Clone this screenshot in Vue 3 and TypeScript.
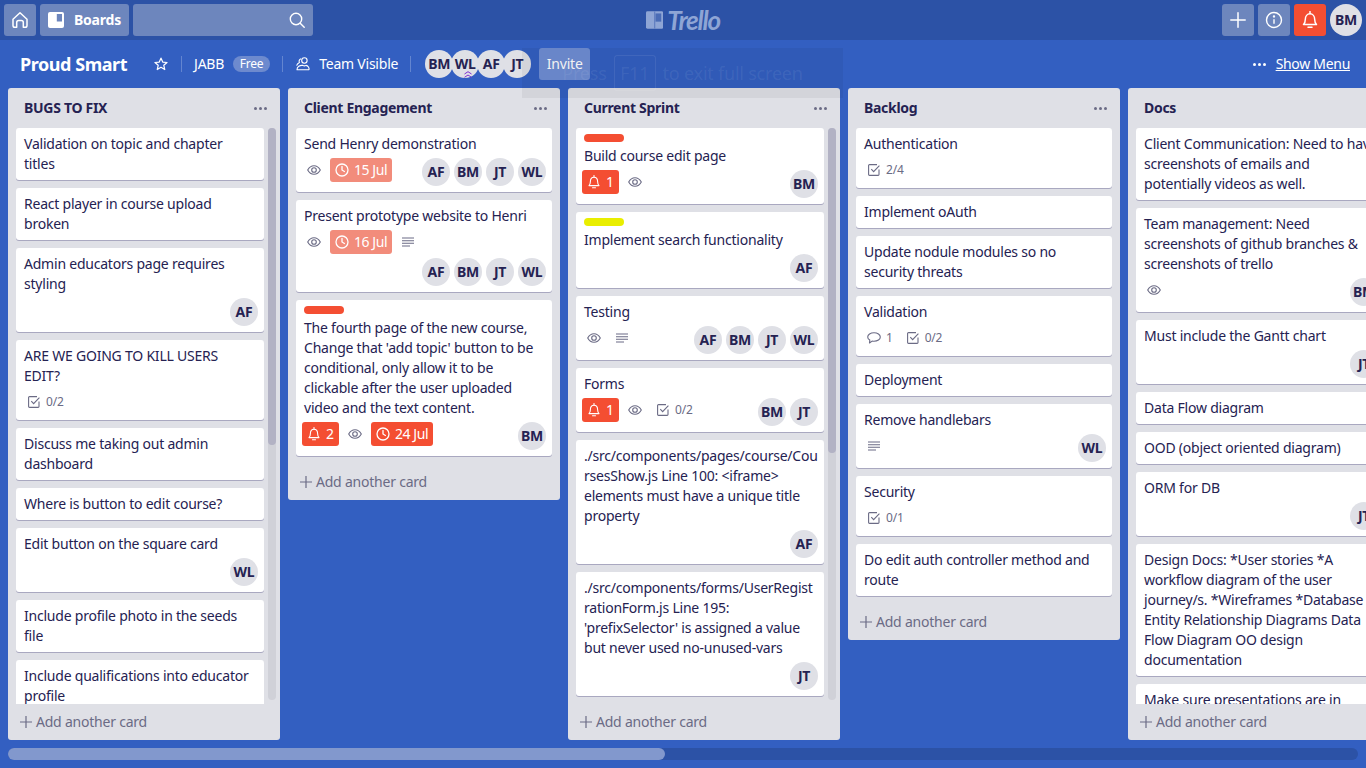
<script setup lang="ts">
type Badge = { kind: 'eye' | 'desc' | 'date' | 'bell' | 'check' | 'comment'; text?: string; overdue?: boolean }
type Card = { lines: string[]; label?: string; badges?: Badge[]; members?: string[] }
type List = { title: string; cards: Card[]; thumb?: number; scrolls?: boolean }

const eye: Badge = { kind: 'eye' }
const desc: Badge = { kind: 'desc' }
const all = ['AF', 'BM', 'JT', 'WL']

const lists: List[] = [
  {
    title: 'BUGS TO FIX',
    thumb: 317,
    scrolls: true,
    cards: [
      { lines: ['Validation on topic and chapter', 'titles'] },
      { lines: ['React player in course upload', 'broken'] },
      { lines: ['Admin educators page requires', 'styling'], members: ['AF'] },
      { lines: ['ARE WE GOING TO KILL USERS', 'EDIT?'], badges: [{ kind: 'check', text: '0/2' }] },
      { lines: ['Discuss me taking out admin', 'dashboard'] },
      { lines: ['Where is button to edit course?'] },
      { lines: ['Edit button on the square card'], members: ['WL'] },
      { lines: ['Include profile photo in the seeds', 'file'] },
      { lines: ['Include qualifications into educator', 'profile'] },
    ],
  },
  {
    title: 'Client Engagement',
    cards: [
      {
        lines: ['Send Henry demonstration'],
        badges: [eye, { kind: 'date', text: '15 Jul' }],
        members: all,
      },
      {
        lines: ['Present prototype website to Henri'],
        badges: [eye, { kind: 'date', text: '16 Jul' }, desc],
        members: all,
      },
      {
        label: '#f44e32',
        lines: [
          'The fourth page of the new course,',
          "Change that 'add topic' button to be",
          'conditional, only allow it to be',
          'clickable after the user uploaded',
          'video and the text content.',
        ],
        badges: [{ kind: 'bell', text: '2' }, eye, { kind: 'date', text: '24 Jul', overdue: true }],
        members: ['BM'],
      },
    ],
  },
  {
    title: 'Current Sprint',
    thumb: 325,
    scrolls: true,
    cards: [
      { label: '#f44e32', lines: ['Build course edit page'], badges: [{ kind: 'bell', text: '1' }, eye], members: ['BM'] },
      { label: '#e9ee00', lines: ['Implement search functionality'], members: ['AF'] },
      { lines: ['Testing'], badges: [eye, desc], members: all },
      {
        lines: ['Forms'],
        badges: [{ kind: 'bell', text: '1' }, eye, { kind: 'check', text: '0/2' }],
        members: ['BM', 'JT'],
      },
      {
        lines: [
          './src/components/pages/course/Cou',
          'rsesShow.js Line 100: <iframe>',
          'elements must have a unique title',
          'property',
        ],
        members: ['AF'],
      },
      {
        lines: [
          './src/components/forms/UserRegist',
          'rationForm.js Line 195:',
          "'prefixSelector' is assigned a value",
          'but never used no-unused-vars',
        ],
        members: ['JT'],
      },
    ],
  },
  {
    title: 'Backlog',
    cards: [
      { lines: ['Authentication'], badges: [{ kind: 'check', text: '2/4' }] },
      { lines: ['Implement oAuth'] },
      { lines: ['Update nodule modules so no', 'security threats'] },
      { lines: ['Validation'], badges: [{ kind: 'comment', text: '1' }, { kind: 'check', text: '0/2' }] },
      { lines: ['Deployment'] },
      { lines: ['Remove handlebars'], badges: [desc], members: ['WL'] },
      { lines: ['Security'], badges: [{ kind: 'check', text: '0/1' }] },
      { lines: ['Do edit auth controller method and', 'route'] },
    ],
  },
  {
    title: 'Docs',
    scrolls: true,
    cards: [
      { lines: ['Client Communication: Need to have', 'screenshots of emails and', 'potentially videos as well.'] },
      {
        lines: ['Team management: Need', 'screenshots of github branches &', 'screenshots of trello'],
        badges: [eye],
        members: ['BM'],
      },
      { lines: ['Must include the Gantt chart'], members: ['JT'] },
      { lines: ['Data Flow diagram'] },
      { lines: ['OOD (object oriented diagram)'] },
      { lines: ['ORM for DB'], members: ['JT'] },
      {
        lines: [
          'Design Docs: *User stories *A',
          'workflow diagram of the user',
          'journey/s. *Wireframes *Database',
          'Entity Relationship Diagrams Data',
          'Flow Diagram OO design',
          'documentation',
        ],
      },
      { lines: ['Make sure presentations are in'] },
    ],
  },
]

const boardMembers = ['BM', 'WL', 'AF', 'JT']
</script>

<template>
  <div class="page">
    <header class="topbar">
      <button class="top-btn square" aria-label="Home">
        <svg width="18" height="18" viewBox="0 0 18 18" fill="none" stroke="#fff" stroke-width="1.5" stroke-linejoin="round">
          <path d="M2 8.2 9 1.8l7 6.4v6.3a1.8 1.8 0 0 1-1.8 1.8h-1.9v-4.8a2 2 0 0 0-2-2H7.700a2 2 0 0 0-2 2v4.800H3.800A1.800 1.800 0 0 1 2 14.500z" />
        </svg>
      </button>
      <button class="top-btn boards">
        <svg width="16" height="16" viewBox="0 0 16 16">
          <rect width="16" height="16" rx="2" fill="#fff" />
          <rect x="8.800" y="2" width="5.200" height="7.500" fill="#6d86bd" />
        </svg>
        <span>Boards</span>
      </button>
      <div class="top-btn search">
        <svg width="16" height="16" viewBox="0 0 16 16" fill="none" stroke="#fff" stroke-width="1.400" stroke-linecap="round">
          <circle cx="7" cy="7" r="5.700" />
          <path d="m11.200 11.200 4 4" />
        </svg>
      </div>
      <div class="logo">
        <svg width="18" height="18" viewBox="0 0 18 18">
          <rect width="18" height="18" rx="1.500" fill="#8ea5d5" />
          <rect x="9.800" y="2.200" width="6" height="8.500" fill="#4a6cb6" />
          <rect x="8.400" y="0" width="1.200" height="18" fill="#5f7dbf" />
        </svg>
        <span>Trello</span>
      </div>
      <button class="top-btn square" aria-label="Create">
        <svg width="16" height="16" viewBox="0 0 16 16" stroke="#fff" stroke-width="1.500" stroke-linecap="round">
          <path d="M8 .8v14.400M.8 8h14.400" />
        </svg>
      </button>
      <button class="top-btn square" aria-label="Information">
        <svg width="18" height="18" viewBox="0 0 18 18" fill="none" stroke="#fff" stroke-width="1.400">
          <circle cx="9" cy="9" r="7.500" />
          <path d="M9 8.200v4.600" />
          <circle cx="9" cy="5.400" r=".5" />
        </svg>
      </button>
      <button class="top-btn square alert" aria-label="Notifications">
        <svg width="16" height="18" viewBox="0 0 16 18" fill="none" stroke="#fff" stroke-width="1.500" stroke-linejoin="round">
          <path d="M1.500 13.500c1.300-1.300 1.800-2.500 1.800-5 0-3.200 2-5.700 4.700-5.700s4.700 2.500 4.700 5.700c0 2.500.5 3.700 1.800 5z" />
          <path d="M6 16.300h4M8 .6v2" stroke-linecap="round" />
        </svg>
      </button>
      <span class="avatar me">BM</span>
    </header>

    <section class="board">
      <div class="board-head">
        <h1 class="board-name">Proud Smart</h1>
        <svg class="star" width="14" height="14" viewBox="0 0 16 16" fill="none" stroke="#fff" stroke-width="1.400" stroke-linejoin="round">
          <path d="m8 1.300 2 4.500 4.900.5-3.700 3.200 1.100 4.800L8 11.800l-4.300 2.500 1.100-4.800L1.100 6.300 6 5.800z" />
        </svg>
        <i class="divider" />
        <span class="head-text">JABB</span>
        <span class="pill">Free</span>
        <i class="divider" />
        <svg class="team" width="14" height="14" viewBox="0 0 14 14" fill="none" stroke="#fff" stroke-width="1.100" stroke-linejoin="round">
          <circle cx="8.400" cy="3.500" r="2.700" />
          <path d="M1 12.700h12c.5-1.800-1-4.100-3-4.300-1 .6-2.200.6-3.200 0C4 8 .9 9.800 1 12.700z" />
          <path d="M5 1.700C3.300 2.200 2.700 4 3.400 5.600 2 6.300 1 7.300.6 8.600" />
        </svg>
        <span class="head-text">Team Visible</span>
        <i class="divider" />
        <div class="head-members">
          <span v-for="m in boardMembers" :key="m" class="avatar head-avatar">
            {{ m }}
            <svg v-if="m === 'WL'" class="admin" width="8" height="7" viewBox="0 0 8 7" fill="none" stroke="#7b2fd0" stroke-width="1">
              <path d="m.5 3 3.500-2.300L7.500 3M.5 6.300 4 4l3.500 2.300" />
            </svg>
          </span>
        </div>
        <button class="invite">Invite</button>
        <span class="head-spacer" />
        <span class="head-dots"><b /><b /><b /></span>
        <a class="show-menu">Show Menu</a>
      </div>

      <div class="lists">
        <div v-for="list in lists" :key="list.title" class="list">
          <div class="list-head">
            <h2>{{ list.title }}</h2>
            <span class="list-dots"><b /><b /><b /></span>
          </div>
          <div class="cards" :class="{ scrolling: list.scrolls }">
            <article v-for="(card, i) in list.cards" :key="i" class="card">
              <div v-if="card.label" class="label" :style="{ background: card.label }" />
              <p class="title">{{ card.lines.join('\n') }}</p>
              <div v-if="card.badges || card.members" class="meta">
                <span
                  v-for="(b, j) in card.badges || []"
                  :key="j"
                  class="badge"
                  :class="['badge-' + b.kind, { overdue: b.overdue }]"
                >
                  <svg v-if="b.kind === 'eye'" width="14" height="10" viewBox="0 0 14 10" fill="none" stroke="currentColor" stroke-width="1.100">
                    <path d="M.7 5C2.200 2.200 4.400.7 7 .7s4.800 1.500 6.300 4.300C11.800 7.800 9.600 9.300 7 9.300S2.200 7.800.7 5z" />
                    <circle cx="7" cy="5" r="2.300" />
                  </svg>
                  <svg v-else-if="b.kind === 'desc'" width="13" height="10" viewBox="0 0 13 10" stroke="currentColor" stroke-width="1.100">
                    <path d="M.5 1h12M.5 3.700h12M.5 6.300h12M.5 9h8" />
                  </svg>
                  <svg v-else-if="b.kind === 'date'" width="14" height="14" viewBox="0 0 14 14" fill="none" stroke="#fff" stroke-width="1.300" stroke-linecap="round">
                    <circle cx="7" cy="7" r="6" />
                    <path d="M7 3.400V7l2.400 1.500" />
                  </svg>
                  <svg v-else-if="b.kind === 'bell'" width="12" height="14" viewBox="0 0 12 14" fill="none" stroke="#fff" stroke-width="1.100" stroke-linejoin="round">
                    <path d="M1 10.600c1-1 1.400-2 1.400-4C2.400 4 3.900 2.200 6 2.200S9.600 4 9.600 6.600c0 2 .4 3 1.400 4z" />
                    <path d="M4.500 12.800h3M6 .5v1.700" stroke-linecap="round" />
                  </svg>
                  <svg v-else-if="b.kind === 'check'" width="12" height="12" viewBox="0 0 12 12" fill="none" stroke="currentColor" stroke-width="1.100">
                    <path d="M11 5.500v5a.9.9 0 0 1-.9.9H1.500a.9.9 0 0 1-.9-.9V1.500a.9.9 0 0 1 .9-.9h7.500" />
                    <path d="m3.300 5.200 2.300 2.400 5.800-6" />
                  </svg>
                  <svg v-else width="14" height="12" viewBox="0 0 14 12" fill="none" stroke="currentColor" stroke-width="1.100" stroke-linejoin="round">
                    <path d="M7 .7c3.500 0 6.300 1.900 6.300 4.300S10.500 9.300 7 9.300c-.7 0-1.300-.1-1.900-.2L2.500 11l.3-3C1.400 7.300.7 6.200.7 5 .7 2.600 3.500.7 7 .7z" />
                  </svg>
                  <span v-if="b.text" class="badge-text">{{ b.text }}</span>
                </span>
                <div v-if="card.members" class="members">
                  <span v-for="m in card.members" :key="m" class="avatar">{{ m }}</span>
                </div>
              </div>
            </article>
          </div>
          <div class="add-card">
            <svg width="12" height="12" viewBox="0 0 12 12" stroke="currentColor" stroke-width="1.200">
              <path d="M6 0v12M0 6h12" />
            </svg>
            <span>Add another card</span>
          </div>
          <div v-if="list.thumb" class="scroll-track">
            <div class="scroll-thumb" :style="{ height: list.thumb + 'px' }" />
          </div>
        </div>
      </div>

      <div class="hscroll"><div class="hthumb" /></div>
    </section>

    <div class="fs-notice">
      <span>Press</span>
      <kbd>F11</kbd>
      <span>to exit full screen</span>
    </div>
  </div>
</template>

<style scoped>
.page {
  position: relative;
  width: 1366px;
  height: 768px;
  overflow: hidden;
  background: #335fc1;
  font-family: "Noto Sans", sans-serif;
  font-size: 14px;
  line-height: 20px;
  letter-spacing: -0.22px;
  color: #252252;
}

button {
  border: 0;
  padding: 0;
  font: inherit;
  letter-spacing: inherit;
  color: #fff;
}

.topbar {
  display: flex;
  align-items: center;
  gap: 4px;
  height: 40px;
  padding: 0 4px;
  box-sizing: border-box;
  background: #2c52a6;
}

.top-btn {
  display: flex;
  flex: none;
  align-items: center;
  height: 32px;
  border-radius: 3px;
  background: #6d86bd;
}

.square {
  justify-content: center;
  width: 32px;
}

.boards {
  gap: 10px;
  width: 89px;
  padding-left: 8px;
  box-sizing: border-box;
  font-weight: 700;
  font-size: 14px;
}

.search {
  justify-content: flex-end;
  width: 180px;
  padding-right: 8px;
  box-sizing: border-box;
}

.logo {
  display: flex;
  flex: none;
  align-items: center;
  gap: 4px;
  width: 74px;
  margin-left: 329px;
  margin-right: 498px;
  color: #8ea5d5;
  font-family: "Lato", sans-serif;
  font-style: italic;
  font-size: 26px;
  font-weight: 700;
  letter-spacing: -1.2px;
  line-height: 32px;
}

.alert {
  background: #f44e32;
}

.avatar {
  display: flex;
  align-items: center;
  justify-content: center;
  flex: none;
  width: 28px;
  height: 28px;
  border-radius: 50%;
  background: #dfe0e6;
  color: #252252;
  font-size: 14px;
  font-weight: 700;
  letter-spacing: -0.3px;
  line-height: 1;
}

.me {
  width: 32px;
  height: 32px;
}

.board-head {
  display: flex;
  align-items: center;
  height: 48px;
  padding: 0 16px 0 20px;
  color: #fff;
}

.board-name {
  margin: 0;
  font-size: 18px;
  font-weight: 700;
  letter-spacing: -0.45px;
  line-height: 24px;
}

.star {
  margin-left: 27px;
  margin-right: 1px;
}

.divider {
  flex: none;
  width: 1px;
  height: 16px;
  margin: 0 12px;
  background: rgba(255, 255, 255, 0.24);
}

.team {
  margin-left: 1px;
  margin-right: 9px;
}

.head-text {
  font-size: 14px;
}

.pill {
  width: 37px;
  margin-left: 9px;
  height: 16px;
  border-radius: 8px;
  background: #6d8ace;
  font-size: 12px;
  line-height: 16px;
  text-align: center;
}

.head-members {
  display: flex;
  margin-left: 2px;
}

.head-avatar {
  position: relative;
  margin-right: -2px;
}

.admin {
  position: absolute;
  right: 7px;
  bottom: 0;
}

.invite {
  width: 51px;
  height: 32px;
  margin-left: 10px;
  border-radius: 3px;
  background: #6f8ed4;
}

.head-spacer {
  flex: 1;
}

.head-dots,
.list-dots {
  display: flex;
  gap: 2px;
}

.head-dots b,
.list-dots b {
  width: 3px;
  height: 3px;
  border-radius: 50%;
  background: #fff;
}

.show-menu {
  margin-left: 10px;
  letter-spacing: -0.3px;
  text-decoration: underline;
}

.lists {
  display: flex;
  align-items: flex-start;
  gap: 8px;
  padding-left: 8px;
}

.list {
  position: relative;
  display: flex;
  flex-direction: column;
  flex: none;
  width: 272px;
  max-height: 652px;
  box-sizing: border-box;
  border-radius: 3px;
  background: #dfe0e6;
}

.list-head {
  display: flex;
  align-items: center;
  justify-content: space-between;
  flex: none;
  height: 40px;
  padding: 0 13px 0 16px;
}

.list-head h2 {
  margin: 0;
  font-size: 14px;
  font-weight: 700;
  letter-spacing: -0.3px;
}

.list-dots b {
  background: #6b6b85;
}

.cards {
  flex: 1;
  min-height: 0;
  overflow: hidden;
  padding: 0 8px;
}

.cards.scrolling {
  padding-right: 16px;
}

.card {
  margin-bottom: 8px;
  padding: 6px 6px 6px 8px;
  border-radius: 3px;
  background: #fff;
  box-shadow: 0 1px 0 #a9a8c0;
}

.label {
  width: 40px;
  height: 8px;
  margin-bottom: 4px;
  border-radius: 4px;
}

.title {
  margin: 0;
  white-space: pre;
}

.meta {
  display: flex;
  flex-wrap: wrap;
  align-items: flex-start;
  row-gap: 4px;
  margin: 4px 0 0 -2px;
}

.badge {
  display: flex;
  align-items: center;
  flex: none;
  height: 24px;
  margin-right: 4px;
  color: #6b6b85;
  font-size: 12px;
  white-space: nowrap;
}

.badge > svg {
  flex: none;
  width: 24px;
}

.badge-text {
  padding-right: 4px;
  line-height: 24px;
}

.badge-date,
.badge-bell {
  border-radius: 3px;
  color: #fff;
}

.badge-date {
  background: #f28c7b;
  width: 62px;
}

.badge-date.overdue {
  background: #f44e32;
}

.badge-bell {
  width: 37px;
  background: #f44e32;
}

.badge-date .badge-text,
.badge-bell .badge-text {
  font-size: 14px;
  letter-spacing: -0.45px;
}

.members {
  display: flex;
  gap: 4px;
  margin-left: auto;
  padding-left: 12px;
}

.add-card {
  display: flex;
  align-items: center;
  gap: 4px;
  flex: none;
  height: 36px;
  padding-left: 12px;
  color: #6b6b85;
}

.scroll-track {
  position: absolute;
  top: 40px;
  right: 4px;
  bottom: 40px;
  width: 8px;
  border-radius: 4px;
  background: #d0d1d8;
}

.scroll-thumb {
  border-radius: 4px;
  background: #b2b2c4;
}

.hscroll {
  height: 12px;
  margin: 8px 8px 0;
  border-radius: 6px;
  background: #2c52a6;
}

.hthumb {
  width: 657px;
  height: 12px;
  border-radius: 6px;
  background: #8298cd;
}

.fs-notice {
  position: absolute;
  top: 48px;
  left: 522px;
  display: flex;
  align-items: center;
  justify-content: center;
  gap: 7px;
  width: 321px;
  height: 50px;
  background: rgba(0, 0, 0, 0.05);
  color: rgba(255, 255, 255, 0.08);
  font-size: 18px;
}

.fs-notice kbd {
  width: 42px;
  height: 36px;
  border: 1px solid rgba(255, 255, 255, 0.08);
  border-radius: 3px;
  box-sizing: border-box;
  font-family: inherit;
  text-align: center;
  line-height: 34px;
}
</style>
